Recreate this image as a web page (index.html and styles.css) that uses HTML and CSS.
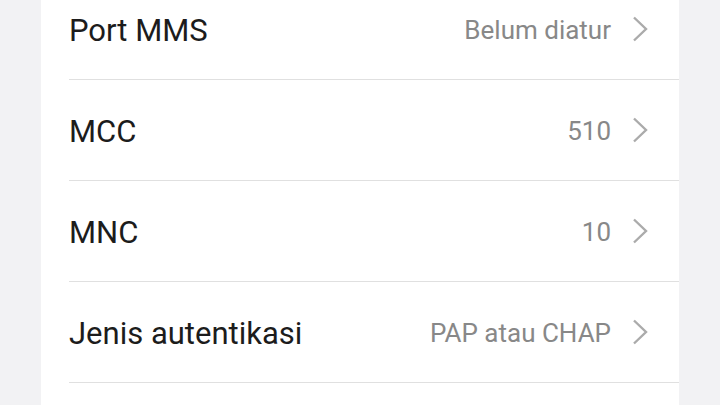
FILE: index.html
```html
<!DOCTYPE html>
<html lang="id">
<head>
    <meta charset="UTF-8">
    <meta name="viewport" content="width=device-width, initial-scale=1.0">
    <title>APN</title>
    <link rel="stylesheet" href="styles.css">
</head>
<body>
    <div class="card">
        <div class="row">
            <span class="label">Port MMS</span>
            <span class="value">Belum diatur</span>
            <svg class="chevron" viewBox="0 0 16 26"><path d="M2 1.5 L14 13 L2 24.5"/></svg>
        </div>
        <div class="row">
            <span class="label">MCC</span>
            <span class="value">510</span>
            <svg class="chevron" viewBox="0 0 16 26"><path d="M2 1.5 L14 13 L2 24.5"/></svg>
        </div>
        <div class="row">
            <span class="label">MNC</span>
            <span class="value">10</span>
            <svg class="chevron" viewBox="0 0 16 26"><path d="M2 1.5 L14 13 L2 24.5"/></svg>
        </div>
        <div class="row">
            <span class="label">Jenis autentikasi</span>
            <span class="value">PAP atau CHAP</span>
            <svg class="chevron" viewBox="0 0 16 26"><path d="M2 1.5 L14 13 L2 24.5"/></svg>
        </div>
    </div>
</body>
</html>
```

FILE: styles.css
```css
body {
    margin: 0;
    padding: 0;
    background-color: #f2f2f4;
    font-family: Roboto, "Noto Sans", sans-serif;
    overflow: hidden;
}
.card {
    margin: -21px 41px 0;
    padding: 0 0 60px 28px;
    background-color: #fff;
}
.row {
    display: flex;
    align-items: center;
    height: 98px;
    padding: 2px 31px 0 0;
    border-bottom: 1px solid #e0e0e0;
}
.label {
    flex: 1;
    font-size: 31px;
    color: #1c1c1c;
}
.value {
    font-size: 26px;
    color: #888888;
    margin-right: 21px;
}
.chevron {
    width: 16px;
    height: 26px;
    margin-top: -2px;
    fill: none;
    stroke: #ababab;
    stroke-width: 2.4;
}
```
